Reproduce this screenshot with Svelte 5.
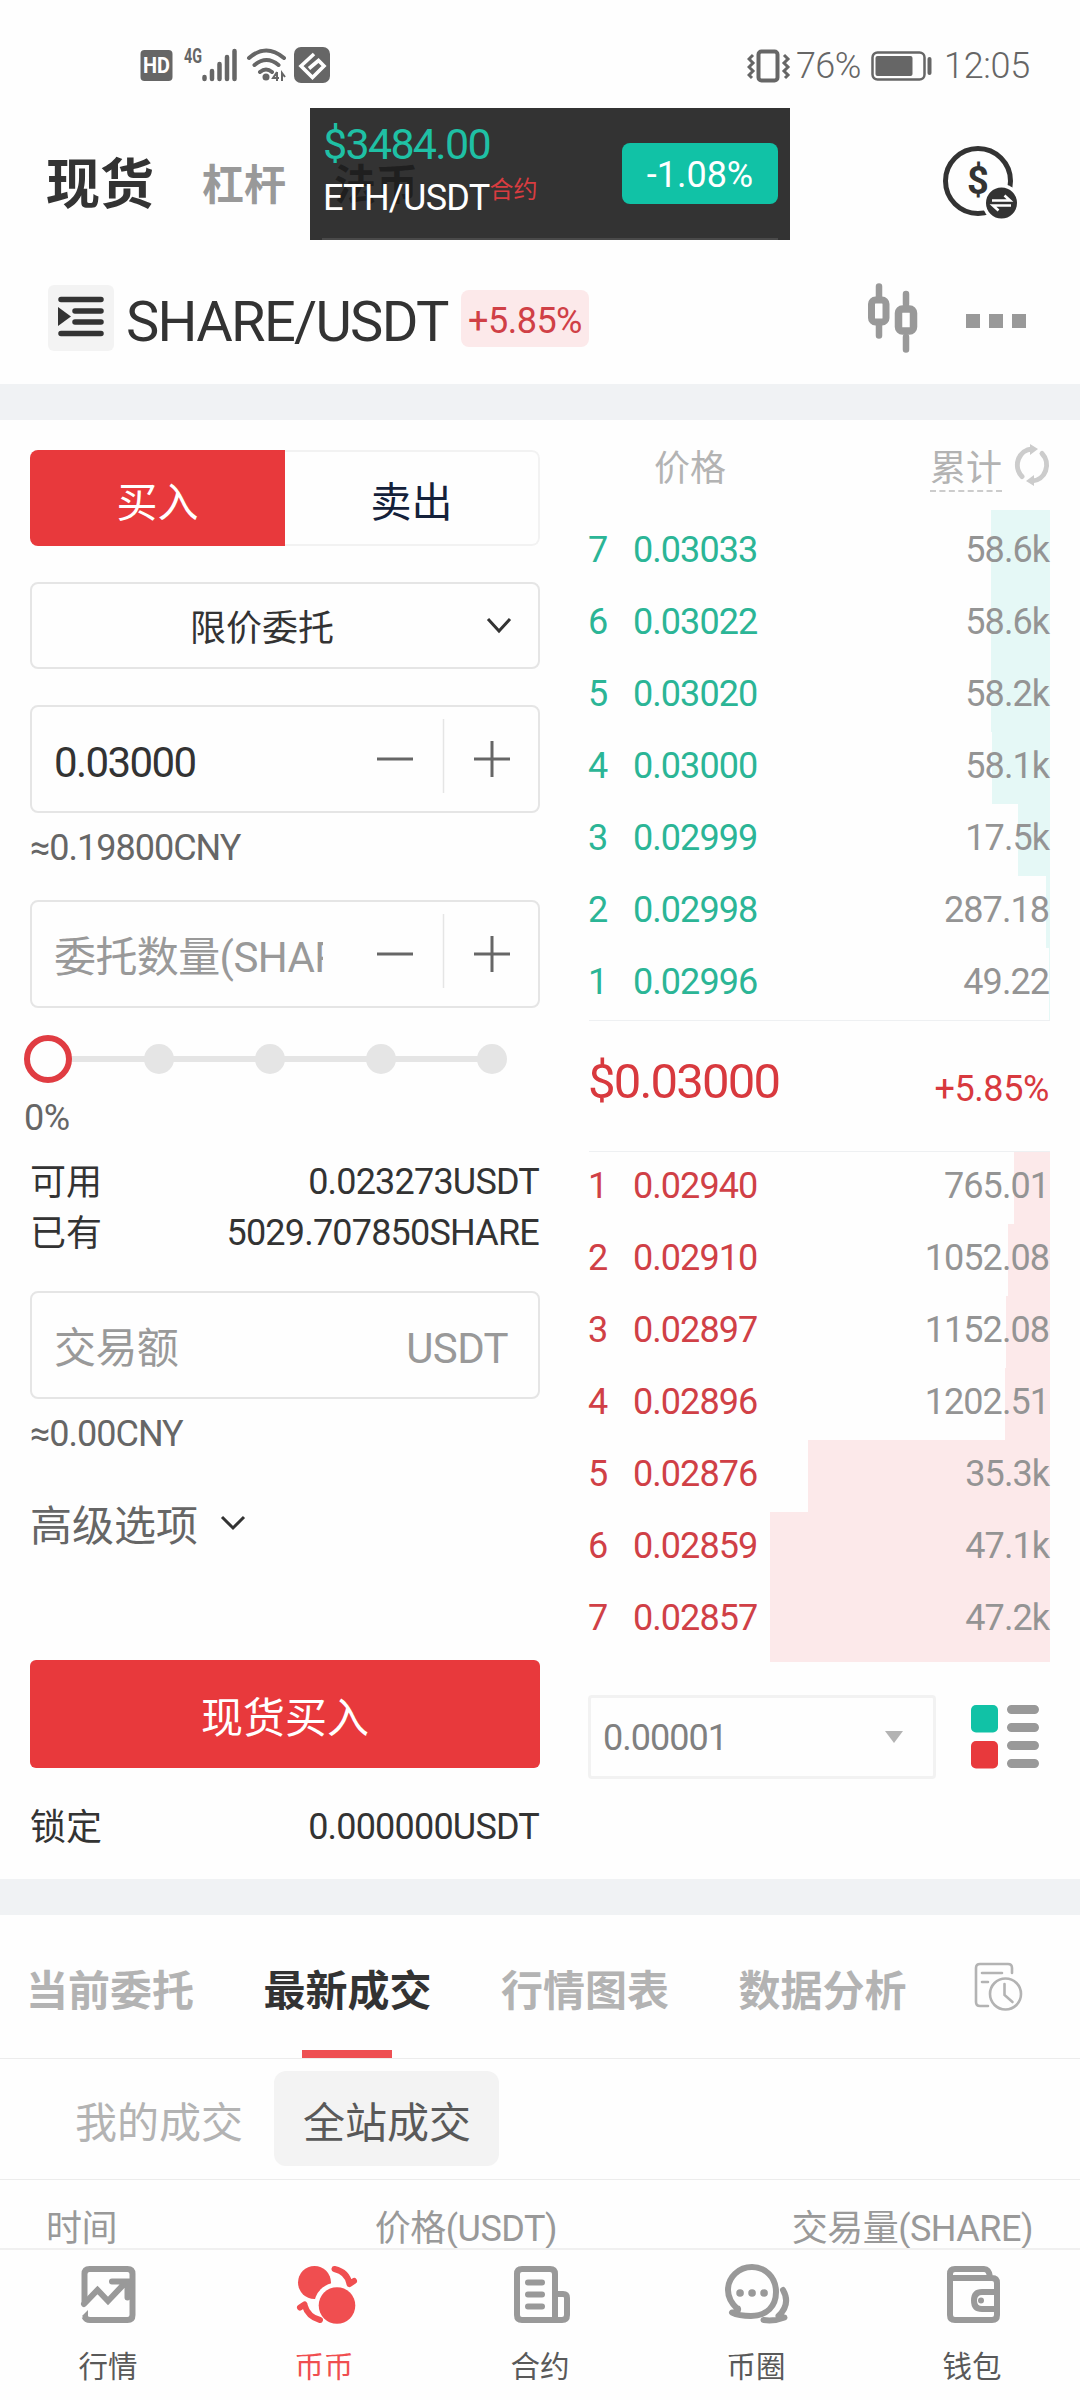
<script>
  let side = 'buy';
  let price = '0.03000';

  const steps = [0, 25, 50, 75, 100];

  // bar = depth width in px
  const asks = [
    { n: 7, price: '0.03033', total: '58.6k', bar: 59 },
    { n: 6, price: '0.03022', total: '58.6k', bar: 59 },
    { n: 5, price: '0.03020', total: '58.2k', bar: 59 },
    { n: 4, price: '0.03000', total: '58.1k', bar: 58 },
    { n: 3, price: '0.02999', total: '17.5k', bar: 32 },
    { n: 2, price: '0.02998', total: '287.18', bar: 4 },
    { n: 1, price: '0.02996', total: '49.22', bar: 1 },
  ];
  const bids = [
    { n: 1, price: '0.02940', total: '765.01', bar: 36 },
    { n: 2, price: '0.02910', total: '1052.08', bar: 42 },
    { n: 3, price: '0.02897', total: '1152.08', bar: 44 },
    { n: 4, price: '0.02896', total: '1202.51', bar: 45 },
    { n: 5, price: '0.02876', total: '35.3k', bar: 242 },
    { n: 6, price: '0.02859', total: '47.1k', bar: 280 },
    { n: 7, price: '0.02857', total: '47.2k', bar: 280 },
  ];

  const tabs = ['当前委托', '最新成交', '行情图表', '数据分析'];
  let activeTab = '最新成交';

  const navs = [
    { id: 'market', label: '行情' },
    { id: 'spot', label: '币币' },
    { id: 'contract', label: '合约' },
    { id: 'chat', label: '币圈' },
    { id: 'wallet', label: '钱包' },
  ];
  let activeNav = 'spot';
</script>

<div class="page">
  <div class="status">
    <svg class="left-icons" width="192" height="52" viewBox="140 40 192 52">
      <rect x="140.500" y="50" width="32" height="31" rx="4" fill="#666" />
      <text x="156.500" y="73" text-anchor="middle" font-size="22" font-weight="700" fill="#fff" textLength="27" lengthAdjust="spacingAndGlyphs">HD</text>
      <text x="184" y="62.500" font-size="20" font-weight="700" fill="#666" textLength="18" lengthAdjust="spacingAndGlyphs">4G</text>
      <g stroke="#666" stroke-width="4.500" stroke-linecap="round">
        <path d="M204.500 77v2M212 71v8M219.500 64v15M227 57v22M234.500 51v28" />
      </g>
      <g fill="none" stroke="#666" stroke-width="4" stroke-linecap="round">
        <path d="M249 58q17-15 35 0M254.500 65q12-10 24 0M260 72q6-5 12 0" />
      </g>
      <circle cx="266" cy="77" r="3.500" fill="#666" />
      <path d="M277 72v9M277 72l-4 6h6M282 81v-8l3 4" fill="none" stroke="#666" stroke-width="2" />
      <rect x="294" y="47" width="36" height="36" rx="7" fill="#666" />
      <path d="M314 54l-13 12 11.500 11.500L324 66l-5.500-5.500-9.500 8" fill="none" stroke="#fff" stroke-width="3.600" />
    </svg>
    <div class="right-icons">
      <svg width="44" height="36" viewBox="0 0 44 36">
        <rect x="11.500" y="3.500" width="19" height="29" rx="3" fill="none" stroke="#666" stroke-width="4" />
        <path d="M6 7l-4 4 4 4-4 4 4 4-4 4 3 3M37 7l4 4-4 4 4 4-4 4 4 4-3 3" fill="none" stroke="#666" stroke-width="3" />
      </svg>
      <span class="percent">76%</span>
      <svg class="battery" width="62" height="30" viewBox="0 0 62 30">
        <rect x="1.500" y="1.500" width="52" height="27" rx="5" fill="none" stroke="#666" stroke-width="2.500" />
        <rect x="4.500" y="5" width="37" height="20" rx="2" fill="#666" />
        <path d="M58.500 8v14" stroke="#666" stroke-width="4" stroke-linecap="round" />
      </svg>
      <span class="clock">12:05</span>
    </div>
  </div>

  <div class="top-tabs">
    <span class="top-tab active">现货</span>
    <span class="top-tab">杠杆</span>
    <span class="top-tab">法币</span>
    <svg class="money" width="74" height="74" viewBox="0 0 74 74">
      <circle cx="35" cy="35" r="32.500" fill="none" stroke="#333" stroke-width="5" />
      <text x="35" y="48" text-anchor="middle" font-size="38" font-weight="700" fill="#333">$</text>
      <circle cx="58.500" cy="57" r="19" fill="#fff" />
      <circle cx="58.500" cy="57" r="15.500" fill="#333" />
      <path d="M49 54.500h18l-5.500-5M68 59.500H50l5.500 5" fill="none" stroke="#fff" stroke-width="2.600" />
    </svg>

    <!-- floating price ticker -->
    <div class="ticker">
      <div class="ticker-info">
        <span class="ticker-price">$3484.00</span>
        <span class="ticker-name">ETH/USDT<sup>合约</sup></span>
      </div>
      <span class="ticker-change">-1.08%</span>
    </div>
  </div>

  <div class="pair">
    <span class="menu">
      <svg width="46" height="42" viewBox="0 0 46 42">
        <path d="M3 3.500h40M17 15h26M17 26h26M3 37.500h40" stroke="#333" stroke-width="5.500" stroke-linecap="round" />
        <path d="M0 11l13 9.500L0 30z" fill="#333" />
      </svg>
    </span>
    <span class="pair-name">SHARE/USDT</span>
    <span class="pair-change">+5.85%</span>
    <svg class="candles" width="52" height="70" viewBox="0 0 52 70">
      <g fill="none" stroke="#999" stroke-linecap="round">
        <rect x="3.500" y="17" width="14.500" height="22" rx="4" stroke-width="7" />
        <path d="M11 3.500V14M11 42v10.500M38 11v10M38 54v12.500" stroke-width="6.500" />
        <rect x="30.500" y="26" width="15" height="22" rx="4" stroke-width="7.500" />
      </g>
    </svg>
    <span class="dots"><i></i><i></i><i></i></span>
  </div>

  <div class="band"></div>

  <div class="trade">
    <div class="form">
      <div class="sides">
        <span class="side" class:on={side === 'buy'}>买入</span>
        <span class="side" class:on={side === 'sell'}>卖出</span>
      </div>

      <div class="select">
        <span class="select-label">限价委托</span>
        <svg width="26" height="18" viewBox="0 0 26 18"><path d="M2 2l11 12L24 2" fill="none" stroke="#333" stroke-width="3" /></svg>
      </div>

      <div class="field">
        <span class="field-text">{price}</span>
        <svg class="stepper" width="140" height="74" viewBox="0 0 140 74">
          <path d="M7 40h36M104 40h36M122 22v36" stroke="#666" stroke-width="3" />
          <path d="M73.500 0v74" stroke="#e5e5e5" stroke-width="1.500" />
        </svg>
      </div>
      <div class="approx">≈0.19800CNY</div>

      <div class="field amount">
        <span class="field-text placeholder">委托数量(SHARE)</span>
        <svg class="stepper" width="140" height="74" viewBox="0 0 140 74">
          <path d="M7 40h36M104 40h36M122 22v36" stroke="#666" stroke-width="3" />
          <path d="M73.500 0v74" stroke="#e5e5e5" stroke-width="1.500" />
        </svg>
      </div>

      <div class="slider">
        {#each steps as step}
          <span class="stop" class:current={step === 0}></span>
        {/each}
      </div>
      <div class="slider-value">0%</div>

      <div class="line"><span>可用</span><span>0.023273USDT</span></div>
      <div class="line"><span>已有</span><span>5029.707850SHARE</span></div>

      <div class="field total">
        <span class="field-text placeholder">交易额</span>
        <span class="unit">USDT</span>
      </div>
      <div class="approx">≈0.00CNY</div>

      <div class="advanced">
        <span>高级选项</span>
        <svg width="26" height="18" viewBox="0 0 26 18"><path d="M2 2l11 11L24 2" fill="none" stroke="#333" stroke-width="3" /></svg>
      </div>

      <div class="submit">现货买入</div>
      <div class="line locked"><span>锁定</span><span>0.000000USDT</span></div>
    </div>

    <div class="book">
      <div class="book-head">
        <span class="head-price">价格</span>
        <span class="head-total">累计</span>
        <svg width="36" height="42" viewBox="0 0 36 42">
          <g fill="none" stroke="#ccc" stroke-width="5">
            <path d="M8 32.500A15 16 0 0 1 18 5" stroke-linecap="round" />
            <path d="M28 9.500A15 16 0 0 1 18 37" stroke-linecap="round" />
          </g>
          <path d="M16 0l8 5-8 6zM20 31l-8 6 8 5z" fill="#ccc" />
        </svg>
      </div>

      <div class="rows asks">
        {#each asks as row}
          <div class="row">
            <span class="depth" style="width: {row.bar}px"></span>
            <span class="n">{row.n}</span>
            <span class="p">{row.price}</span>
            <span class="t">{row.total}</span>
          </div>
        {/each}
      </div>

      <div class="last">
        <span class="last-price">$0.03000</span>
        <span class="last-change">+5.85%</span>
      </div>

      <div class="rows bids">
        {#each bids as row}
          <div class="row">
            <span class="depth" style="width: {row.bar}px"></span>
            <span class="n">{row.n}</span>
            <span class="p">{row.price}</span>
            <span class="t">{row.total}</span>
          </div>
        {/each}
      </div>

      <div class="book-foot">
        <div class="precision">
          <span>0.00001</span>
          <svg width="18" height="12" viewBox="0 0 18 12"><path d="M0 0h18L9 12z" fill="#b3b3b3" /></svg>
        </div>
        <svg width="68" height="64" viewBox="0 0 68 64">
          <rect width="27" height="27.500" rx="5" fill="#11c2a6" />
          <rect y="36" width="27" height="27.500" rx="5" fill="#e8393c" />
          <g stroke="#999" stroke-width="9" stroke-linecap="round">
            <path d="M40.500 4.500h23M40.500 22.500h23M40.500 40.500h23M40.500 58.500h23" />
          </g>
        </svg>
      </div>
    </div>
  </div>

  <div class="band"></div>

  <div class="tabs">
    {#each tabs as tab}
      <span class="tab" class:active={tab === activeTab}>{tab}</span>
    {/each}
    <svg width="50" height="50" viewBox="0 0 50 50">
      <g fill="none" stroke="#b3b3b3" stroke-width="2.600" stroke-linecap="round">
        <path d="M38 11V6q0-4-4-4H6Q2 2 2 6v34q0 4 4 4h8M8 11h20M8 20h6" />
        <circle cx="31.500" cy="32" r="15.500" />
        <path d="M30.500 22v11l8 7" />
      </g>
    </svg>
  </div>

  <div class="subtabs">
    <span class="subtab">我的成交</span>
    <span class="subtab on">全站成交</span>
  </div>

  <div class="deals-head">
    <span>时间</span>
    <span>价格(USDT)</span>
    <span>交易量(SHARE)</span>
  </div>

  <div class="nav">
    {#each navs as item}
      <div class="nav-item" class:active={item.id === activeNav}>
        <svg width="70" height="64" viewBox="0 0 70 64" fill="none" stroke="currentColor" stroke-width="6" stroke-linecap="round" stroke-linejoin="round">
          {#if item.id === 'market'}
            <path d="M9.500 40V11q0-5 5-5h38q5 0 5 5v41q0 5-5 5H15q-4 0-5.500-3.500" stroke-linecap="butt" />
            <path d="M9 41l13.500-14L33 38l18-19M37 18.500h15.500v16" stroke-linejoin="miter" />
            <path d="M7 53l6-6v6l-3 3z" fill="currentColor" stroke="none" />
          {:else if item.id === 'spot'}
            <circle cx="23.500" cy="19.500" r="16.500" fill="currentColor" stroke="none" />
            <circle cx="46" cy="42.500" r="23" fill="#fefefe" stroke="none" />
            <circle cx="46" cy="42.500" r="18.300" fill="currentColor" stroke="none" />
            <path d="M43.500 6q13 3 15 15M58.500 21l4.500-3M29 57q-12-3-15.500-15M13.500 41.500l-4.500 3" />
          {:else if item.id === 'contract'}
            <path d="M48 57H15q-5 0-5-5V11q0-5 5-5h28q5 0 5 5v46h7q5 0 5-5V35q0-4-4-4h-7" />
            <path d="M21 19.500h14M21 31.500h14M21 43.500h14" />
          {:else if item.id === 'chat'}
            <path d="M14.500 46C8 40 5 34 5 27C5 14 16 4 29 4s24 10 24 25c0 14-9 24-25 24q-12 0-19-3.500q7-.5 6-4z" />
            <path d="M60 27q8 14-4.500 26q2 2 6 1.500q-10 4-21 2.500" />
            <path d="M17 30h.1M29 30h.1M41 30h.1" stroke-width="7.500" />
          {:else}
            <path d="M51 14q-1-8-6-8H16q-5 0-5 5v4M11 11v41q0 5 5 5h37q5 0 5-5V20q0-5-5-5H11M58 29H43q-8 0-8 8.500t8 8.500h15" />
            <circle cx="42" cy="37.500" r="3" fill="currentColor" stroke="none" />
          {/if}
        </svg>
        <span>{item.label}</span>
      </div>
    {/each}
  </div>
</div>

<style>
  :global(body) {
    background: #fefefe;
  }

  .page {
    display: flex;
    flex-direction: column;
    width: 1080px;
    height: 2400px;
    overflow: hidden;
    background: #fefefe;
    color: #333;
    font-family: Roboto, 'Noto Sans CJK SC', sans-serif;
    font-size: 36px;
    line-height: 1;
  }

  svg {
    display: block;
    flex: none;
  }

  span {
    white-space: nowrap;
  }

  .status {
    display: flex;
    justify-content: space-between;
    align-items: center;
    height: 108px;
    padding: 24px 47px 0 140px;
    box-sizing: border-box;
    color: #666;
  }

  .right-icons {
    display: flex;
    align-items: center;
    font-weight: 300;
  }

  .percent {
    width: 65px;
    margin-left: 5px;
    letter-spacing: -0.6px;
  }

  .battery {
    margin: 0 11px 0 10px;
  }

  .clock {
    width: 89px;
    letter-spacing: -0.3px;
  }

  .top-tabs {
    position: relative;
    display: flex;
    align-items: center;
    height: 150px;
    padding: 4px 63px 0 46px;
    box-sizing: border-box;
  }

  .top-tab {
    margin: 1px 48px 0 0;
    color: #999;
    font-size: 42px;
    font-weight: 700;
  }

  .top-tab.active {
    color: #333;
    font-size: 54px;
  }

  .money {
    margin: -5px 0 0 auto;
  }

  .ticker {
    position: absolute;
    left: 310px;
    top: 0;
    display: flex;
    justify-content: space-between;
    align-items: flex-start;
    width: 480px;
    height: 132px;
    padding: 0 12px 0 13px;
    box-sizing: border-box;
    background: rgba(0, 0, 0, 0.8);
  }

  .ticker::after {
    content: '';
    position: absolute;
    left: 12px;
    right: 12px;
    bottom: 0;
    height: 2px;
    background: #4a4a4a;
  }

  .ticker-info {
    display: flex;
    flex-direction: column;
    padding-top: 14px;
  }

  .ticker-price {
    color: #1fc0a5;
    font-size: 43px;
    line-height: 44px;
    letter-spacing: -1.7px;
  }

  .ticker-name {
    margin-top: 14px;
    color: #fff;
    line-height: 36px;
    letter-spacing: -0.7px;
  }

  .ticker-name sup {
    color: #d83c40;
    font-size: 24px;
    line-height: 0;
    vertical-align: 12px;
    letter-spacing: 0;
  }

  .ticker-change {
    width: 156px;
    height: 61px;
    margin-top: 35px;
    border-radius: 8px;
    background: #11c2a6;
    color: #fff;
    line-height: 65px;
    text-align: center;
  }

  .pair {
    display: flex;
    align-items: center;
    height: 126px;
    padding: 0 54px 6px 48px;
    box-sizing: border-box;
  }

  .menu {
    display: flex;
    align-items: center;
    justify-content: center;
    width: 66px;
    height: 66px;
    border-radius: 6px;
    background: #f3f3f3;
  }

  .menu svg {
    margin-top: -3px;
  }

  .pair-name {
    width: 335px;
    margin-left: 12px;
    padding-top: 7px;
    font-size: 56px;
    letter-spacing: -1.7px;
  }

  .pair-change {
    width: 128px;
    height: 57px;
    border-radius: 8px;
    background: #fce9ea;
    color: #d04046;
    line-height: 62px;
    text-align: center;
    letter-spacing: -0.5px;
  }

  .candles {
    margin-left: auto;
  }

  .dots {
    display: flex;
    gap: 9px;
    margin: 6px 0 0 46px;
  }

  .dots i {
    width: 14px;
    height: 14px;
    background: #999;
  }

  .band {
    flex: none;
    height: 36px;
    background: #f0f2f4;
  }

  .trade {
    display: flex;
    justify-content: space-between;
    height: 1459px;
    padding: 0 30px;
  }

  .form {
    width: 510px;
    padding-top: 30px;
  }

  .sides {
    display: flex;
    height: 96px;
    border-radius: 8px;
    overflow: hidden;
  }

  .side {
    width: 255px;
    box-sizing: border-box;
    border: 2px solid #f2f2f2;
    border-left: none;
    border-radius: 0 8px 8px 0;
    color: #14213a;
    font-size: 41px;
    line-height: 103px;
    text-align: center;
  }

  .side.on {
    border: none;
    border-radius: 0;
    background: #e8393c;
    color: #fff;
    line-height: 107px;
  }

  .select {
    display: flex;
    align-items: center;
    height: 87px;
    margin-top: 36px;
    padding: 0 26px 0 6px;
    box-sizing: border-box;
    border: 2px solid #e5e5e5;
    border-radius: 8px;
  }

  .select-label {
    flex: 1;
    padding-top: 7px;
    text-align: center;
  }

  .field {
    display: flex;
    align-items: center;
    justify-content: space-between;
    height: 108px;
    margin-top: 36px;
    padding: 0 28px 0 22px;
    box-sizing: border-box;
    border: 2px solid #e5e5e5;
    border-radius: 8px;
  }

  .field-text {
    width: 269px;
    padding-top: 7px;
    overflow: hidden;
    font-size: 42px;
    line-height: 50px;
    letter-spacing: -1.6px;
  }

  .placeholder {
    padding-top: 7px;
    color: #999;
    letter-spacing: -0.6px;
  }

  .stepper {
    margin-top: -6px;
  }

  .approx {
    height: 36px;
    margin-top: 17px;
    color: #666;
    letter-spacing: -1px;
  }

  .amount {
    margin-top: 34px;
  }

  .slider {
    position: relative;
    display: flex;
    align-items: center;
    justify-content: space-between;
    width: 483px;
    height: 48px;
    margin: 27px 0 0 -6px;
  }

  .slider::before {
    content: '';
    position: absolute;
    left: 24px;
    right: 15px;
    top: 21px;
    height: 6px;
    background: #e5e5e5;
  }

  .stop {
    position: relative;
    width: 30px;
    height: 30px;
    border-radius: 50%;
    background: #e5e5e5;
  }

  .stop.current {
    width: 48px;
    height: 48px;
    margin-right: -9px;
    box-sizing: border-box;
    border: 6px solid #e03c42;
    background: #fefefe;
  }

  .slider-value {
    height: 36px;
    margin: 17px 0 0 -6px;
    color: #666;
    letter-spacing: -0.6px;
  }

  .line {
    display: flex;
    justify-content: space-between;
    height: 51px;
    line-height: 51px;
    letter-spacing: -0.8px;
  }

  .line span:first-child {
    letter-spacing: 0;
    padding-top: 1px;
  }

  .line span:last-child {
    margin-right: 1px;
  }

  .slider-value + .line {
    margin-top: 21px;
  }

  .total {
    margin-top: 32px;
  }

  .unit {
    padding-top: 7px;
    color: #999;
    font-size: 42px;
    letter-spacing: -0.6px;
    margin-right: 2px;
  }

  .advanced {
    display: flex;
    align-items: center;
    gap: 22px;
    height: 50px;
    margin-top: 50px;
    color: #666;
    font-size: 42px;
  }

  .advanced svg {
    margin-top: -7px;
  }

  .submit {
    height: 108px;
    margin-top: 108px;
    border-radius: 6px;
    background: #e8393c;
    color: #fff;
    font-size: 42px;
    line-height: 118px;
    text-align: center;
  }

  .locked {
    margin-top: 34px;
  }

  .book {
    width: 461px;
  }

  .book-head {
    display: flex;
    align-items: flex-start;
    height: 96px;
    padding-top: 24px;
    box-sizing: border-box;
    color: #b3b3b3;
  }

  .head-price {
    flex: 1;
    padding: 7px 0 0 65px;
  }

  .head-total {
    width: 72px;
    height: 39px;
    margin-right: 12px;
    padding-top: 7px;
    border-bottom: 2px dashed #ccc;
  }

  .row {
    position: relative;
    display: flex;
    height: 72px;
    line-height: 69px;
    letter-spacing: -0.95px;
  }

  .depth {
    position: absolute;
    right: 0;
    top: 0;
    bottom: 0;
    background: #e5f8f6;
  }

  .asks .row:first-child .depth {
    top: -6px;
  }

  .bids .depth {
    background: #fce9ea;
  }

  .bids .row:last-child .depth {
    bottom: -6px;
  }

  .n,
  .p,
  .t {
    position: relative;
  }

  .n {
    width: 45px;
    margin-left: -1px;
    color: #2bb596;
  }

  .p {
    flex: 1;
    color: #2bb596;
  }

  .bids .n,
  .bids .p {
    color: #d04046;
  }

  .t {
    margin-right: 1px;
    color: #949494;
  }

  .last {
    display: flex;
    justify-content: space-between;
    height: 132px;
    box-sizing: border-box;
    border-top: 1px solid #eef0f2;
    border-bottom: 1px solid #eef0f2;
    color: #d8393e;
    line-height: 136px;
    letter-spacing: -0.4px;
  }

  .last-price {
    margin-left: -1px;
    font-size: 49px;
    line-height: 122px;
    letter-spacing: -1.8px;
  }

  .last-change {
    margin-right: 1px;
  }

  .book-foot {
    display: flex;
    align-items: center;
    justify-content: space-between;
    margin-top: 39px;
    padding-right: 11px;
  }

  .precision {
    display: flex;
    align-items: center;
    justify-content: space-between;
    width: 348px;
    height: 84px;
    margin-left: -1px;
    padding: 2px 30px 0 12px;
    box-sizing: border-box;
    border: 3px solid #f2f2f2;
    border-radius: 4px;
    color: #808080;
    letter-spacing: -1px;
  }

  .precision svg {
    margin-top: -2px;
  }

  .tabs {
    display: flex;
    height: 144px;
    padding: 0 0 0 26px;
    box-sizing: border-box;
    border-bottom: 1px solid #ececec;
  }

  .tabs svg {
    margin: 47px 0 0 -2px;
  }

  .tab {
    position: relative;
    width: 168px;
    margin-right: 69.5px;
    color: #b3b3b3;
    font-size: 42px;
    font-weight: 700;
    line-height: 154px;
  }

  .tab.active {
    color: #333;
  }

  .tab.active::after {
    content: '';
    position: absolute;
    left: 38px;
    bottom: 0;
    width: 90px;
    height: 8px;
    background: #ee5053;
  }

  .subtabs {
    display: flex;
    height: 121px;
    padding: 12px 0 0 45px;
    box-sizing: border-box;
    border-bottom: 1px solid #ececec;
    font-size: 42px;
  }

  .subtab {
    height: 95px;
    padding: 0 31px 0 30px;
    border-radius: 12px;
    color: #b3b3b3;
    line-height: 105px;
  }

  .subtab.on {
    width: 168px;
    padding: 0 28px 0 29px;
    background: #f3f3f3;
    color: #595959;
  }

  .deals-head {
    display: flex;
    justify-content: space-between;
    height: 68px;
    padding: 0 47px 0 46px;
    color: #999;
    line-height: 99px;
    letter-spacing: -0.5px;
  }

  .deals-head span:nth-child(2) {
    margin-left: 23px;
  }

  .nav {
    display: flex;
    flex: 1;
    border-top: 2px solid #f0f0f0;
    background: #fefefe;
    z-index: 1;
  }

  .nav-item {
    display: flex;
    flex: 1;
    flex-direction: column;
    align-items: center;
    padding-top: 13px;
    color: #999;
  }

  .nav-item svg {
    margin-left: 3px;
  }

  .nav-item span {
    margin-top: 26px;
    color: #595959;
    font-size: 29.5px;
  }

  .nav-item.active,
  .nav-item.active span {
    color: #f04e50;
  }
</style>
